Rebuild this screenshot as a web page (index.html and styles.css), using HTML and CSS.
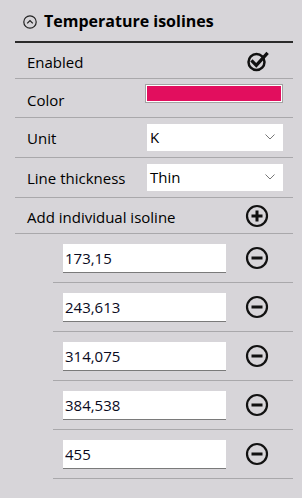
FILE: index.html
```html
<!DOCTYPE html>
<html lang="en">
<head>
    <meta charset="UTF-8">
    <title>Temperature isolines</title>
    <link rel="stylesheet" href="styles.css">
</head>
<body>
    <div class="panel">
        <div class="panel-header">
            <svg class="collapse-icon" width="14" height="14" viewBox="0 0 14 14">
                <circle cx="7" cy="7" r="6.2" fill="none" stroke="#222" stroke-width="1.2"/>
                <path d="M4.2 8.4 L7 5.6 L9.8 8.4" fill="none" stroke="#222" stroke-width="1.3"/>
            </svg>
            <span class="panel-title">Temperature isolines</span>
        </div>

        <div class="row row-short">
            <span class="label">Enabled</span>
            <svg class="icon" width="22" height="22" viewBox="0 0 22 22">
                <circle cx="9.5" cy="12" r="8" fill="none" stroke="#111" stroke-width="2.5"/>
                <path d="M5.6 11.6 L9.3 15.3 L19.5 4.2" fill="none" stroke="#111" stroke-width="3.3" stroke-linecap="square"/>
            </svg>
        </div>

        <div class="row row-color">
            <span class="label">Color</span>
            <div class="swatch"><div class="swatch-fill"></div></div>
        </div>

        <div class="row row-tall">
            <span class="label">Unit</span>
            <div class="select">
                <span>K</span>
                <svg width="10" height="6" viewBox="0 0 10 6"><path d="M0.5 0.5 L5 5 L9.5 0.5" fill="none" stroke="#777" stroke-width="1"/></svg>
            </div>
        </div>

        <div class="row row-tall">
            <span class="label">Line thickness</span>
            <div class="select">
                <span>Thin</span>
                <svg width="10" height="6" viewBox="0 0 10 6"><path d="M0.5 0.5 L5 5 L9.5 0.5" fill="none" stroke="#777" stroke-width="1"/></svg>
            </div>
        </div>

        <div class="row row-short">
            <span class="label">Add individual isoline</span>
            <svg class="icon" width="24" height="24" viewBox="0 0 24 24">
                <circle cx="12" cy="12" r="10" fill="none" stroke="#111" stroke-width="2.2"/>
                <path d="M12 6.5 V17.5 M6.5 12 H17.5" fill="none" stroke="#111" stroke-width="3"/>
            </svg>
        </div>

        <div class="isoline">
            <input class="value" type="text" value="173,15">
            <svg class="icon" width="24" height="24" viewBox="0 0 24 24">
                <circle cx="12" cy="12" r="10" fill="none" stroke="#111" stroke-width="2.2"/>
                <path d="M6.5 12 H17.5" fill="none" stroke="#111" stroke-width="3"/>
            </svg>
        </div>
        <div class="isoline">
            <input class="value" type="text" value="243,613">
            <svg class="icon" width="24" height="24" viewBox="0 0 24 24">
                <circle cx="12" cy="12" r="10" fill="none" stroke="#111" stroke-width="2.2"/>
                <path d="M6.5 12 H17.5" fill="none" stroke="#111" stroke-width="3"/>
            </svg>
        </div>
        <div class="isoline">
            <input class="value" type="text" value="314,075">
            <svg class="icon" width="24" height="24" viewBox="0 0 24 24">
                <circle cx="12" cy="12" r="10" fill="none" stroke="#111" stroke-width="2.2"/>
                <path d="M6.5 12 H17.5" fill="none" stroke="#111" stroke-width="3"/>
            </svg>
        </div>
        <div class="isoline">
            <input class="value" type="text" value="384,538">
            <svg class="icon" width="24" height="24" viewBox="0 0 24 24">
                <circle cx="12" cy="12" r="10" fill="none" stroke="#111" stroke-width="2.2"/>
                <path d="M6.5 12 H17.5" fill="none" stroke="#111" stroke-width="3"/>
            </svg>
        </div>
        <div class="isoline">
            <input class="value" type="text" value="455">
            <svg class="icon" width="24" height="24" viewBox="0 0 24 24">
                <circle cx="12" cy="12" r="10" fill="none" stroke="#111" stroke-width="2.2"/>
                <path d="M6.5 12 H17.5" fill="none" stroke="#111" stroke-width="3"/>
            </svg>
        </div>
    </div>
</body>
</html>
```

FILE: styles.css
```css
body {
    margin: 0;
    background-color: #d7d5d9;
    font-family: "Open Sans", "Noto Sans", sans-serif;
    font-size: 15px;
    color: #000;
}
.panel {
    padding: 0 9px 0 15px;
}
.panel-header {
    display: flex;
    align-items: center;
    height: 41px;
    border-bottom: 2px solid #2b2b2b;
    padding-left: 8px;
}
.collapse-icon {
    margin-right: 7px;
    margin-top: 2px;
}
.panel-title {
    font-weight: bold;
    font-size: 16px;
}
.row {
    display: flex;
    align-items: center;
    justify-content: space-between;
    border-bottom: 1px solid #a9a8ab;
    padding-left: 12px;
    padding-right: 10px;
}
.row-short {
    height: 35px;
    padding-right: 24px;
}
.row-short .label {
    margin-top: 3px;
}
.row-color {
    height: 38px;
    align-items: flex-start;
}
.row-color .label {
    margin-top: 11px;
}
.row-tall {
    height: 39px;
}
.label {
    line-height: 20px;
}
.swatch {
    margin-top: 5px;
    width: 136px;
    height: 17px;
    border: 1px solid #a3a3a3;
}
.swatch-fill {
    height: 15px;
    border: 1px solid #fff;
    background-color: #e20e5e;
}
.select {
    display: flex;
    align-items: center;
    justify-content: space-between;
    width: 136px;
    height: 27px;
    box-sizing: border-box;
    padding: 0 8px 0 3px;
    background-color: #fff;
    margin-top: -1px;
}
.isoline {
    display: flex;
    align-items: center;
    justify-content: space-between;
    height: 48px;
    margin-left: 38px;
    padding-left: 10px;
    padding-right: 24px;
    border-bottom: 1px solid #a9a8ab;
}
.value {
    width: 163px;
    height: 29px;
    box-sizing: border-box;
    margin: 1px 0 0 0;
    padding: 0 2px;
    border: none;
    border-bottom: 1px solid #7a7a7a;
    background-color: #fff;
    font-family: "Open Sans", "Noto Sans", sans-serif;
    font-size: 15px;
    color: #0a0a1e;
    outline: none;
}
```
